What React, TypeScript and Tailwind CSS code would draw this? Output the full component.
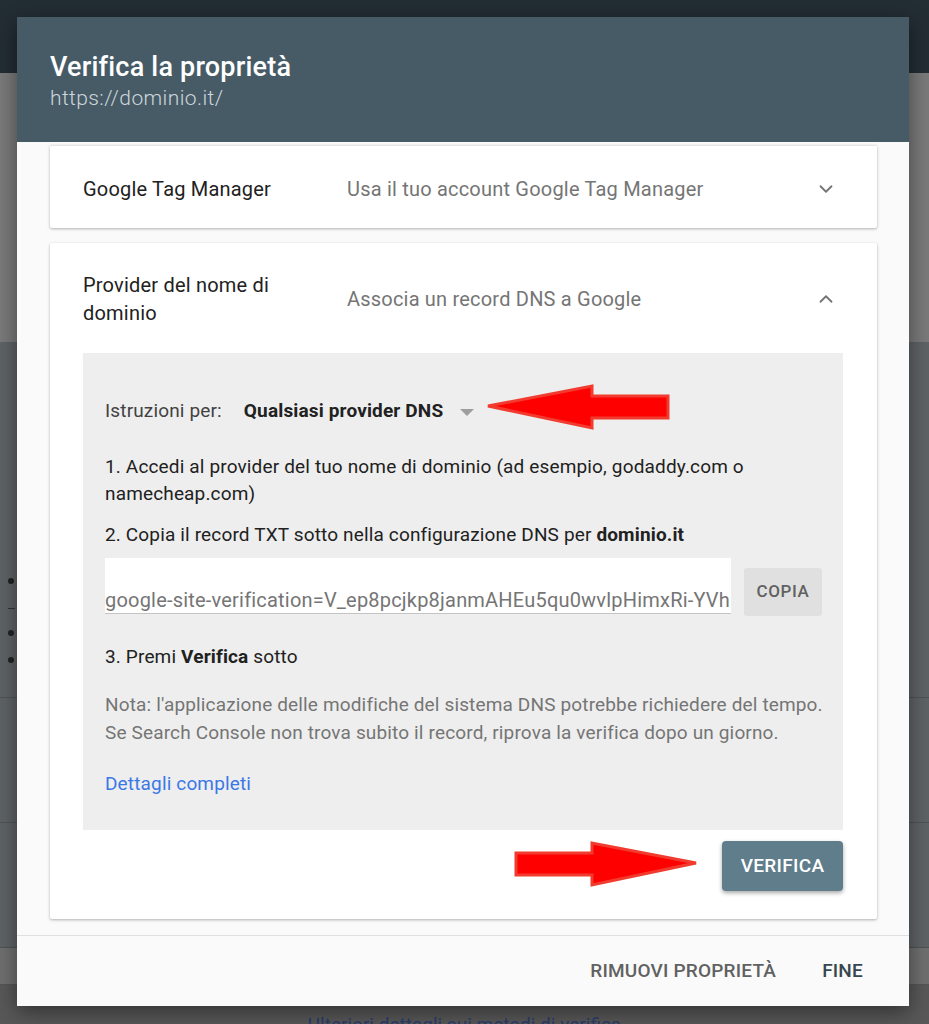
import React from "react";
import { ChevronDown, ChevronUp } from "lucide-react";

const font = "font-['Roboto',sans-serif]";

// red annotation arrow, drawn pointing right; flip for left
function RedArrow({ flip }: { flip?: boolean }) {
  return (
    <svg
      width="184"
      height="48"
      viewBox="0 0 184 48"
      className={flip ? "-scale-x-100" : ""}
    >
      <path
        d="M2 12 L78 12 L78 2 L182 22 L78 44 L78 34 L2 34 Z"
        fill="#ff0000"
        stroke="#f23b2f"
        strokeWidth="3"
        strokeLinejoin="miter"
      />
    </svg>
  );
}

function Background() {
  return (
    <div className="flex flex-col w-full h-full overflow-hidden">
      <div className="h-[73px] shrink-0 bg-[#232d34]"></div>
      <div className="h-[269px] shrink-0 bg-[#7a7a7a]"></div>
      <div className="h-[356px] shrink-0 bg-[#5e6366] border-b border-[#4f5356] pl-[8px] pt-[236px]">
        <div className="w-[6px] h-[6px] rounded-full bg-[#222]"></div>
        <div className="w-[7px] h-px bg-[#333] mt-[24px]"></div>
        <div className="w-[6px] h-[6px] rounded-full bg-[#222] mt-[21px]"></div>
        <div className="w-[6px] h-[6px] rounded-full bg-[#222] mt-[21px]"></div>
      </div>
      <div className="h-[125px] shrink-0 bg-[#5e6366] border-b border-[#4f5356]"></div>
      <div className="h-[125px] shrink-0 bg-[#5e6366] border-b border-[#4f5356]"></div>
      <div className="h-[37px] shrink-0 bg-[#6f6f6f] border-b border-[#555]"></div>
      <div className="h-[80px] shrink-0 bg-[#585858] flex justify-center">
        <span className={`${font} text-[19px] text-[#2b3c6b] mt-[28px] leading-[24px] whitespace-nowrap`}>
          Ulteriori dettagli sui metodi di verifica
        </span>
      </div>
    </div>
  );
}

function Card({ children }: { children: React.ReactNode }) {
  return (
    <div className="bg-white rounded-[2px] shadow-[0_1px_3px_rgba(0,0,0,0.3)]">
      {children}
    </div>
  );
}

export default function App() {
  return (
    <div className={`relative w-[929px] h-[1024px] overflow-hidden ${font}`}>
      <Background />

      {/* Dialog */}
      <div className="absolute left-[17px] top-[17px] w-[892px] h-[989px] flex flex-col bg-[#fafafa] shadow-[0_6px_20px_rgba(0,0,0,0.45)]">
        {/* Header */}
        <div className="h-[125px] bg-[#475b67] pl-[33px] pt-[34px]">
          <h1 className="text-[27px] leading-[33px] font-medium text-white tracking-[0.2px]">
            Verifica la proprietà
          </h1>
          <p className="text-[21px] leading-[26px] font-light text-[#cdd6db] mt-[1px] tracking-[0.4px]">
            https://dominio.it/
          </p>
        </div>

        {/* Body */}
        <div className="flex-1 overflow-hidden pl-[33px] pr-[32px] pt-[3px] flex flex-col gap-[15px]">
          <Card>
            <div className="h-[83px] flex items-center pl-[33px] pr-[40px] border-t border-[#e6e6e6] pt-[3px]">
              <div className="w-[264px] text-[20px] tracking-[0.2px] text-[#212121]">Google Tag Manager</div>
              <div className="flex-1 text-[20px] tracking-[0.2px] text-[#757575]">
                Usa il tuo account Google Tag Manager
              </div>
              <ChevronDown size={22} strokeWidth={2} className="text-[#757575]" />
            </div>
          </Card>

          <Card>
            <div className="flex items-center pl-[33px] pr-[40px] pt-[28px] pb-[26px]">
              <div className="w-[264px] text-[20px] tracking-[0.2px] leading-[28px] text-[#212121]">
                <div className="w-[200px]">Provider del nome di dominio</div>
              </div>
              <div className="flex-1 text-[20px] tracking-[0.2px] text-[#757575]">
                Associa un record DNS a Google
              </div>
              <ChevronUp size={22} strokeWidth={2} className="text-[#757575]" />
            </div>

            <div className="pl-[33px] pr-[34px] pb-[28px]">
              {/* Instructions panel */}
              <div className="bg-[#eeeeee] pl-[22px] pr-[16px] pt-[40px] pb-[33px] text-[19px] tracking-[0.15px] text-[#212121]">
                <div className="h-[36px] flex items-center">
                  <span className="text-[#424242]">Istruzioni per:</span>
                  <span className="ml-[22px] font-bold">Qualsiasi provider DNS</span>
                  <span className="ml-[17px] mt-[2px] w-0 h-0 border-l-[7px] border-r-[7px] border-t-[7px] border-l-transparent border-r-transparent border-t-[#9e9e9e]"></span>
                </div>

                <p className="mt-[24px] leading-[27px]">
                  1. Accedi al provider del tuo nome di dominio (ad esempio, godaddy.com o
                  <br />
                  namecheap.com)
                </p>
                <p className="mt-[14px] leading-[27px]">
                  2. Copia il record TXT sotto nella configurazione DNS per{" "}
                  <span className="font-bold">dominio.it</span>
                </p>

                <div className="mt-[10px] flex items-end gap-[13px]">
                  <div className="w-[626px] shrink-0 h-[56px] bg-white border-b border-[#c4c4c4] flex items-end overflow-hidden">
                    <span className="whitespace-nowrap text-[20px] tracking-[0.2px] leading-[24px] text-[#757575] pb-[1px]">
                      google-site-verification=V_ep8pcjkp8janmAHEu5qu0wvlpHimxRi-YVhk3Q9zE
                    </span>
                  </div>
                  <button className="w-[78px] shrink-0 h-[48px] mb-[-2px] rounded-[3px] bg-[#e0e0e0] text-[17px] font-medium tracking-[0.6px] text-[#616161]">
                    COPIA
                  </button>
                </div>

                <p className="mt-[29px] leading-[27px]">
                  3. Premi <span className="font-bold">Verifica</span> sotto
                </p>

                <p className="mt-[21px] leading-[28px] text-[#757575]">
                  Nota: l'applicazione delle modifiche del sistema DNS potrebbe richiedere del tempo.
                  <br />
                  Se Search Console non trova subito il record, riprova la verifica dopo un giorno.
                </p>

                <p className="mt-[23px] leading-[27px] text-[#3b78e7]">Dettagli completi</p>
              </div>

              <div className="flex justify-end mt-[11px]">
                <button className="w-[121px] h-[50px] rounded-[4px] bg-[#607d8b] text-white text-[19px] font-medium tracking-[0.3px] shadow-[0_2px_4px_rgba(0,0,0,0.35)]">
                  VERIFICA
                </button>
              </div>
            </div>
          </Card>
        </div>

        {/* Footer */}
        <div className="h-[71px] border-t border-[#e0e0e0] flex items-center justify-end gap-[46px] pr-[46px] text-[19px] tracking-[0.2px] font-medium">
          <span className="text-[#616161]">RIMUOVI PROPRIETÀ</span>
          <span className="text-[#37474f]">FINE</span>
        </div>
      </div>

      {/* Annotation arrows */}
      <div className="absolute left-[486px] top-[384px]">
        <RedArrow flip />
      </div>
      <div className="absolute left-[514px] top-[841px]">
        <RedArrow />
      </div>
    </div>
  );
}
